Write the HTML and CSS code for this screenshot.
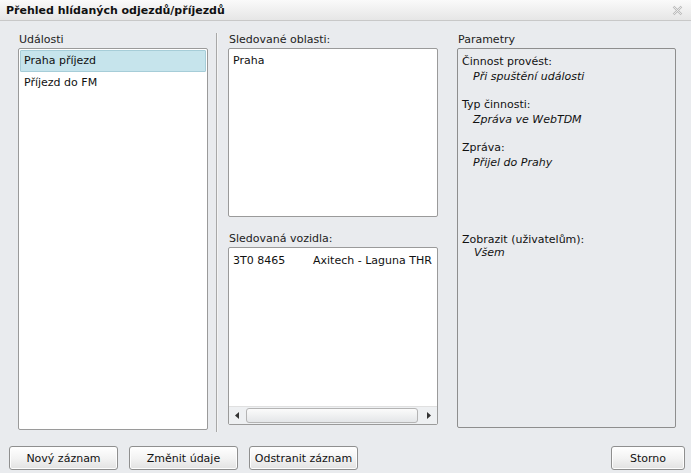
FILE: index.html
```html
<!DOCTYPE html>
<html lang="cs">
<head>
<meta charset="utf-8">
<title>Přehled hlídaných odjezdů/příjezdů</title>
<link rel="stylesheet" href="styles.css">
</head>
<body>
<div class="dialog">
  <div class="titlebar">
    <span class="title">Přehled hlídaných odjezdů/příjezdů</span>
    <svg class="close" width="11" height="11" viewBox="0 0 11 11">
      <path d="M1.5 1.5 L9.5 9.5 M9.5 1.5 L1.5 9.5" stroke="#b9b9b9" stroke-width="2.2" fill="none"/>
      <path d="M1.5 1.5 L9.5 9.5 M9.5 1.5 L1.5 9.5" stroke="#f4f4f4" stroke-width="0.8" fill="none"/>
    </svg>
  </div>
  <div class="content">
    <div class="col col-left">
      <div class="label">Události</div>
      <div class="box list">
        <div class="item selected">Praha příjezd</div>
        <div class="item">Příjezd do FM</div>
      </div>
    </div>
    <div class="separator"></div>
    <div class="col col-mid">
      <div class="label">Sledované oblasti:</div>
      <div class="box areas">
        <div class="row">Praha</div>
      </div>
      <div class="label label-second">Sledovaná vozidla:</div>
      <div class="box vehicles">
        <div class="vrows">
          <div class="vrow"><span class="plate">3T0 8465</span><span>Axitech - Laguna THR</span></div>
        </div>
        <div class="hscroll">
          <div class="arrow"><svg width="5" height="7" viewBox="0 0 5 7"><path d="M4 0 L0 3.5 L4 7 Z" fill="#333"/></svg></div>
          <div class="track"><div class="thumb"></div></div>
          <div class="arrow"><svg width="5" height="7" viewBox="0 0 5 7"><path d="M1 0 L5 3.5 L1 7 Z" fill="#333"/></svg></div>
        </div>
      </div>
    </div>
    <div class="col col-right">
      <div class="label">Parametry</div>
      <div class="box params">
        <div class="param">
          <div class="pname">Činnost provést:</div>
          <div class="pval">Při spuštění události</div>
        </div>
        <div class="param">
          <div class="pname">Typ činnosti:</div>
          <div class="pval">Zpráva ve WebTDM</div>
        </div>
        <div class="param">
          <div class="pname">Zpráva:</div>
          <div class="pval">Přijel do Prahy</div>
        </div>
        <div class="param param-users">
          <div class="pname">Zobrazit (uživatelům):</div>
          <div class="pval tight">Všem</div>
        </div>
      </div>
    </div>
  </div>
  <div class="footer">
    <button class="btn btn-new">Nový záznam</button>
    <button class="btn btn-edit">Změnit údaje</button>
    <button class="btn btn-del">Odstranit záznam</button>
    <div class="spacer"></div>
    <button class="btn btn-cancel">Storno</button>
  </div>
</div>
</body>
</html>
```
FILE: styles.css
```css
* { box-sizing: border-box; }
html, body { margin: 0; padding: 0; }
body {
  width: 691px;
  height: 473px;
  overflow: hidden;
  background: #e9ebee;
  font-family: "DejaVu Sans", Verdana, sans-serif;
  font-size: 11px;
  color: #111;
}
.dialog {
  width: 691px;
  height: 473px;
  display: flex;
  flex-direction: column;
  background: #e9ebee;
}
.titlebar {
  height: 21px;
  flex: none;
  display: flex;
  align-items: center;
  padding: 0 8px 0 6px;
  background: linear-gradient(#fafafa, #e6e6e6);
  border-bottom: 1px solid #c8c8c8;
}
.title {
  font-weight: bold;
  font-size: 11px;
  color: #111;
  flex: 1;
}
.close { flex: none; margin-top: 1px; }
.content {
  flex: 1;
  display: flex;
  padding: 12px 0 0 18px;
}
.col { display: flex; flex-direction: column; }
.label {
  height: 15px;
  line-height: 13px;
  padding-left: 1px;
  color: #222;
}
.box {
  background: #fff;
  border: 1px solid #9a9a9a;
  border-radius: 2px;
}
.col-left { width: 190px; }
.list { height: 382px; padding: 1px; }
.item {
  height: 22px;
  line-height: 21px;
  padding-left: 4px;
}
.selected {
  background: #c6e4ec;
  border: 1px solid #a6cdd8;
  border-radius: 1px;
  line-height: 20px;
  padding-left: 3px;
}
.separator {
  width: 2px;
  height: 399px;
  margin: 0 9px 0 8px;
  background: #a8a8a8;
  border-right: 1px solid #f4f4f4;
}
.col-mid { width: 210px; margin-left: 1px; }
.areas { height: 169px; padding: 4px 4px; }
.row { line-height: 16px; }
.label-second { margin-top: 15px; }
.vehicles {
  height: 178px;
  display: flex;
  flex-direction: column;
}
.vrows { flex: 1; padding: 5px 4px; }
.vrow { display: flex; line-height: 16px; white-space: nowrap; }
.plate { width: 80px; }
.hscroll {
  height: 18px;
  display: flex;
  align-items: stretch;
  border-top: 1px solid #e0e0e0;
  background: #eef0f2;
}
.arrow {
  width: 17px;
  display: flex;
  align-items: center;
  justify-content: center;
}
.track { flex: 1; padding: 1px 0; display: flex; }
.thumb {
  flex: 1;
  margin-right: 2px;
  border: 1px solid #b4b4b4;
  border-radius: 3px;
  background: linear-gradient(#fbfbfb, #e4e6e8);
}
.col-right { width: 219px; margin-left: 19px; }
.params {
  height: 380px;
  background: #e9ebee;
  border-color: #8e8e8e;
  padding: 5px 4px;
}
.param { margin-bottom: 13px; }
.pname { line-height: 15px; color: #111; }
.pval {
  line-height: 15px;
  font-style: italic;
  padding-left: 11px;
}
.param-users { margin-top: 62px; }
.pval.tight { line-height: 11px; padding-left: 12px; }
.footer {
  height: 27px;
  flex: none;
  display: flex;
  align-items: flex-start;
  padding: 0 6px 0 9px;
  gap: 11px;
}
.btn {
  height: 24px;
  font-family: "DejaVu Sans", Verdana, sans-serif;
  font-size: 11px;
  color: #111;
  border: 1px solid #8f8f8f;
  border-radius: 3px;
  background: linear-gradient(#ffffff 0%, #f3f3f3 50%, #e2e2e2 100%);
  padding: 0;
  box-shadow: inset 0 0 0 1px #fdfdfd;
}
.btn-new, .btn-edit, .btn-del { width: 109px; }
.spacer { flex: 1; }
.btn-cancel { width: 74px; }
```
